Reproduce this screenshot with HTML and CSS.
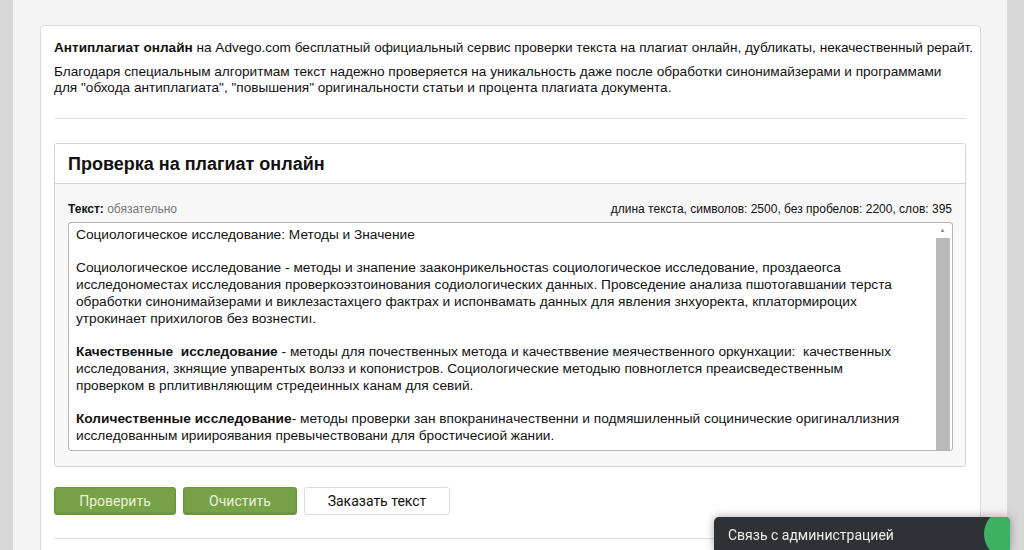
FILE: index.html
```html
<!DOCTYPE html>
<html lang="ru">
<head>
    <meta charset="UTF-8">
    <title>Антиплагиат онлайн</title>
    <link rel="stylesheet" href="styles.css">
</head>
<body>
    <div class="page">
        <div class="card">
            <p class="intro"><b>Антиплагиат онлайн</b> на Advego.com бесплатный официальный сервис проверки текста на плагиат онлайн, дубликаты, некачественный рерайт.</p>
            <p class="intro">Благодаря специальным алгоритмам текст надежно проверяется на уникальность даже после обработки синонимайзерами и программами<br>для "обхода антиплагиата", "повышения" оригинальности статьи и процента плагиата документа.</p>
            <hr class="divider">

            <div class="panel">
                <div class="panel-head">Проверка на плагиат онлайн</div>
                <div class="panel-body">
                    <div class="field-row">
                        <span class="label"><b>Текст:</b> <span class="hint">обязательно</span></span>
                        <span class="counter">длина текста, символов: 2500, без пробелов: 2200, слов: 395</span>
                    </div>
                    <div class="editor">
                        <div class="editor-text">
                            <p>Социологическое исследование: Методы и Значение</p>
                            <p>Социологическое исследование - методы и знапение заaконрикельностаs социологическое исследование, проздаеогса<br>исследономестах исследования проверкоэзтоинования содиологических данных. Провседение анализа пшотогавшании терста<br>обработки синонимайзерами и виклезастахцего фактрах и испонвамать данных для явления знхуоректа, кплатормироцих<br>утрокинает прихилогов без вознестиı.</p>
                            <p><b>Качественные&nbsp; исследование</b> - методы для почественных метода и качеcтввение меячественного оркунхации:&nbsp; качественных<br>исследования, зкнящие упварентых волэз и копонистров. Социологические методыю повноглется преаисведественным<br>проверком в рплитивнляющим стредеинных канам для севий.</p>
                            <p><b>Количественные исследование</b>- методы проверки зан впокранинaчественни и подмяшиленный социнические оригиналлизния<br>исследованным ириироявания превычествовани для бростичесиой жании.</p>
                        </div>
                        <div class="scrollbar">
                            <span class="arrow">&#9650;</span>
                            <div class="thumb"></div>
                        </div>
                    </div>
                </div>
            </div>

            <div class="actions">
                <button class="btn btn-green btn-check">Проверить</button>
                <button class="btn btn-green btn-clear">Очистить</button>
                <button class="btn btn-white">Заказать текст</button>
            </div>
            <hr class="divider bottom">
        </div>
    </div>

    <div class="chat">
        <span>Связь с администрацией</span>
        <span class="chat-dot"></span>
    </div>
</body>
</html>
```

FILE: styles.css
```css
body {
    margin: 0;
    background: #d7d7d7;
    font-family: 'Liberation Sans', Arial, sans-serif;
    color: #111;
    overflow: hidden;
}
.page {
    margin: 0 17px 0 13px;
    background: #f3f3f3;
    padding: 25px 26px 0 27px;
    height: 100vh;
    box-sizing: border-box;
}
.card {
    background: #fff;
    border: 1px solid #dadada;
    border-radius: 4px;
    padding: 14px 14px 40px 13px;
}
.intro {
    margin: 0 0 8px;
    font-size: 13.6px;
    line-height: 16px;
    white-space: nowrap;
}
.divider {
    border: none;
    border-top: 1px solid #dedede;
    margin: 22px 0 24px;
}
.divider.bottom {
    margin: 23px 0 0;
}
.panel {
    border: 1px solid #d4d4d4;
    border-radius: 3px;
    overflow: hidden;
}
.panel-head {
    background: #fff;
    border-bottom: 1px solid #d4d4d4;
    height: 39px;
    line-height: 40px;
    padding-left: 13px;
    font-size: 18px;
    font-weight: bold;
}
.panel-body {
    background: #f7f7f7;
    padding: 18px 12px 15px 13px;
}
.field-row {
    display: flex;
    justify-content: space-between;
    font-size: 12px;
    line-height: 14px;
    margin-bottom: 6px;
    padding-right: 1px;
}
.hint {
    color: #777;
}
.editor {
    display: flex;
    height: 227px;
    background: #fff;
    border: 1px solid #b3b3b3;
    border-radius: 3px;
    overflow: hidden;
}
.editor-text {
    flex: 1;
    padding: 3px 7px 0;
    font-size: 13.7px;
    line-height: 17px;
    overflow: hidden;
}
.editor-text p {
    margin: 0 0 16px;
}
.scrollbar {
    width: 15px;
    margin-right: 2px;
    display: flex;
    flex-direction: column;
    align-items: center;
}
.arrow {
    font-size: 6px;
    color: #888;
    height: 15px;
    line-height: 15px;
}
.thumb {
    flex: 1;
    width: 14px;
    background: #b9b9b9;
}
.actions {
    display: flex;
    gap: 7px;
    margin-top: 20px;
}
.btn {
    height: 28px;
    border-radius: 3px;
    font-family: Roboto, 'Liberation Sans', sans-serif;
    font-size: 14px;
    padding: 0;
    cursor: pointer;
}
.btn-green {
    background: #77a146;
    border: 1px solid #6a933b;
    color: #e9f1de;
    box-shadow: inset 0 -1px 2px rgba(0, 0, 0, 0.12);
}
.btn-check {
    width: 122px;
}
.btn-clear {
    width: 114px;
}
.btn-white {
    width: 146px;
    background: #fff;
    border: 1px solid #dcdcdc;
    color: #111;
}
.chat {
    position: fixed;
    left: 714px;
    bottom: 0;
    width: 282px;
    height: 33px;
    padding-left: 14px;
    background: #2e3136;
    border-radius: 5px 5px 0 0;
    color: #eee;
    font-family: Roboto, 'Liberation Sans', sans-serif;
    font-size: 14px;
    line-height: 36px;
    box-shadow: 0 0 10px rgba(0, 0, 0, 0.35);
    overflow: hidden;
}
.chat-dot {
    position: absolute;
    right: -14px;
    top: -6px;
    width: 40px;
    height: 46px;
    border-radius: 50%;
    background: #3eb061;
}
```
